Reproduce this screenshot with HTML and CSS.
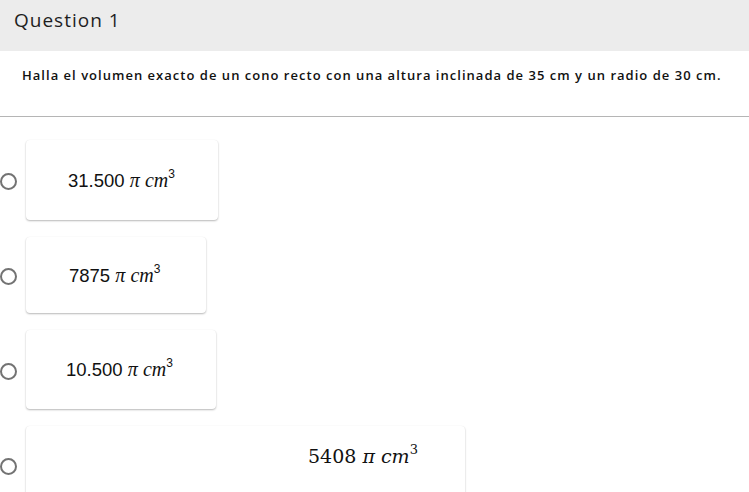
FILE: index.html
```html
<!DOCTYPE html>
<html lang="es">
<head>
<meta charset="utf-8">
<title>Question 1</title>
<link rel="stylesheet" href="styles.css">
</head>
<body>
<header class="q-header">Question 1</header>
<p class="q-text">Halla el volumen exacto de un cono recto con una altura inclinada de 35 cm y un radio de 30 cm.</p>
<hr class="q-divider">
<ul class="options">
  <li class="option">
    <span class="radio"></span>
    <div class="card card-a"><span class="ans">31.500 <i class="mi">π</i> <i class="mi">cm</i><sup class="sup">3</sup></span></div>
  </li>
  <li class="option">
    <span class="radio"></span>
    <div class="card card-b"><span class="ans">7875 <i class="mi">π</i> <i class="mi">cm</i><sup class="sup">3</sup></span></div>
  </li>
  <li class="option">
    <span class="radio"></span>
    <div class="card card-c"><span class="ans">10.500 <i class="mi">π</i> <i class="mi">cm</i><sup class="sup">3</sup></span></div>
  </li>
  <li class="option">
    <span class="radio"></span>
    <div class="card card-d"><span class="serif">5408 <i>π</i> <i>cm</i><sup class="sup-serif">3</sup></span></div>
  </li>
</ul>
</body>
</html>
```
FILE: styles.css
```css
html, body {
  margin: 0;
  padding: 0;
  background: #ffffff;
  overflow: hidden;
}
body {
  font-family: "Open Sans", "Liberation Sans", sans-serif;
  color: #222;
}
.q-header {
  background: #ececec;
  height: 51px;
  box-sizing: border-box;
  padding: 7px 0 0 14px;
  font-size: 19px;
  font-weight: 400;
  letter-spacing: 1px;
  color: #1e1e1e;
}
.q-text {
  margin: 0;
  height: 65px;
  box-sizing: border-box;
  padding: 15px 0 0 22px;
  font-size: 13px;
  font-weight: 600;
  letter-spacing: 1.02px;
  color: #111;
  white-space: nowrap;
}
.q-divider {
  margin: 0;
  border: 0;
  height: 1px;
  background: #b5b5b5;
}
.options {
  list-style: none;
  margin: 0;
  padding: 23px 0 0 0;
  display: flex;
  flex-direction: column;
  gap: 17px;
}
.option {
  display: flex;
  align-items: center;
}
.radio {
  width: 13px;
  height: 13px;
  border: 2px solid #737373;
  border-radius: 50%;
  margin-right: 9px;
  margin-top: 3px;
  flex: none;
}
.card {
  background: #fff;
  border-radius: 4px;
  box-shadow: 0 1px 2px rgba(0,0,0,0.28), 0 0 1px rgba(0,0,0,0.05);
  display: flex;
  align-items: center;
  box-sizing: border-box;
  color: #111;
}
.ans {
  font-family: "Liberation Sans", Arial, sans-serif;
  font-size: 18.5px;
  white-space: pre;
}
.card-a { width: 192px; height: 80px; padding-left: 42px; }
.card-b { width: 180px; height: 76px; padding-left: 43px; }
.card-c { width: 190px; height: 79px; padding-left: 40px; }
.card-d { width: 439px; height: 78px; padding-left: 282px; align-items: flex-start; padding-top: 19px; }
.mi {
  font-family: "Liberation Serif", "Times New Roman", serif;
  font-style: italic;
  font-size: 20px;
}
.sup {
  font-size: 12px;
  vertical-align: 0;
  position: relative;
  top: -9px;
}
.serif {
  font-family: "DejaVu Serif", "Liberation Serif", serif;
  font-size: 19px;
  white-space: pre;
  color: #111;
}
.sup-serif {
  font-size: 13px;
  vertical-align: 0;
  position: relative;
  top: -9px;
}
```
